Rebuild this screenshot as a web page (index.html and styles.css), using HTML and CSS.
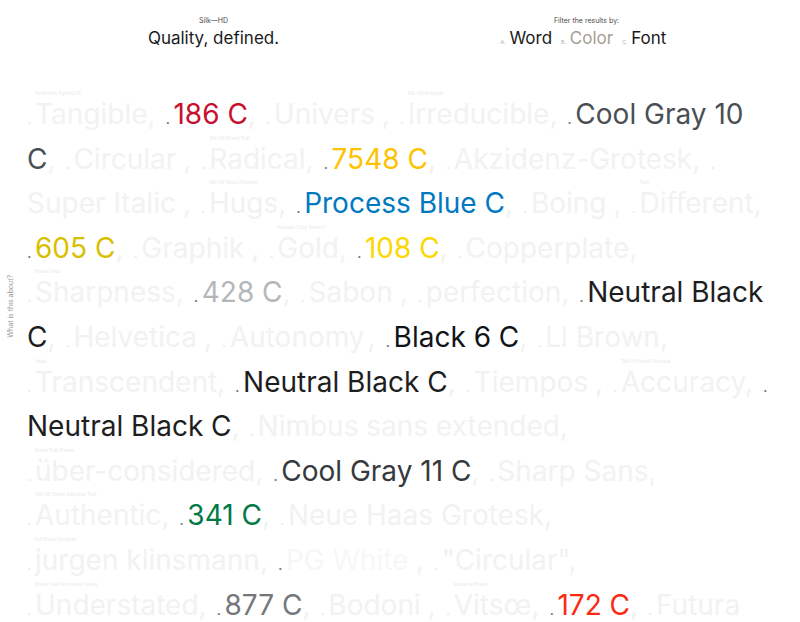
FILE: index.html
```html
<!DOCTYPE html>
<html lang="en">
<head>
<meta charset="utf-8">
<title>Silk—HD</title>
<link rel="stylesheet" href="styles.css">
</head>
<body>
<header class="top">
  <div class="brand">
    <div class="kicker">Silk—HD</div>
    <div class="title">Quality, defined.</div>
  </div>
  <div class="filter">
    <div class="kicker">Filter the results by:</div>
    <div class="title opts"><span class="opt"><span class="key">A.</span>Word</span><span class="opt muted"><span class="key">B.</span>Color</span><span class="opt"><span class="key">C.</span>Font</span></div>
  </div>
</header>
<aside class="about">What is this about?</aside>
<main class="cloud">
<p class="lines"><span class="it"><span class="lbl">Serial Font Symbol 01</span><span class="d">.</span>Tangible</span><span class="c">,</span> <span class="it k186"><span class="d">.</span>186 C</span><span class="c">,</span> <span class="it x"><span class="d">.</span>Univers</span><span class="c">,</span> <span class="it"><span class="lbl">Silk-HD Principle</span><span class="d">.</span>Irreducible</span><span class="c">,</span> <span class="it kcg10"><span class="d">.</span>Cool Gray 10<br>C</span><span class="c">,</span> <span class="it x"><span class="d">.</span>Circular</span><span class="c">,</span> <span class="it"><span class="lbl">Silk-HD Brand Trait</span><span class="d">.</span>Radical</span><span class="c">,</span> <span class="it k7548"><span class="d">.</span>7548 C</span><span class="c">,</span> <span class="it"><span class="d">.</span>Akzidenz-Grotesk</span><span class="c">,</span> <span class="it x"><span class="d">.</span><br>Super Italic</span><span class="c">,</span> <span class="it"><span class="lbl">Silk-HD Brand Emotion</span><span class="d">.</span>Hugs</span><span class="c">,</span> <span class="it kblue"><span class="d">.</span>Process Blue C</span><span class="c">,</span> <span class="it x"><span class="d">.</span>Boing</span><span class="c">,</span> <span class="it"><span class="lbl">Trait</span><span class="d">.</span>Different</span><span class="c">,</span><br><span class="it k605"><span class="d">.</span>605 C</span><span class="c">,</span> <span class="it x"><span class="d">.</span>Graphik</span><span class="c">,</span> <span class="it"><span class="lbl">Pantone Color Swatch</span><span class="d">.</span>Gold</span><span class="c">,</span> <span class="it k108"><span class="d">.</span>108 C</span><span class="c">,</span> <span class="it"><span class="d">.</span>Copperplate</span><span class="c">,</span><br><span class="it"><span class="lbl">Brand Value</span><span class="d">.</span>Sharpness</span><span class="c">,</span> <span class="it k428"><span class="d">.</span>428 C</span><span class="c">,</span> <span class="it x"><span class="d">.</span>Sabon</span><span class="c">,</span> <span class="it"><span class="d">.</span>perfection</span><span class="c">,</span> <span class="it knb"><span class="d">.</span>Neutral Black<br>C</span><span class="c">,</span> <span class="it x"><span class="d">.</span>Helvetica</span><span class="c">,</span> <span class="it y"><span class="d">.</span>Autonomy</span><span class="c">,</span> <span class="it kb6"><span class="d">.</span>Black 6 C</span><span class="c">,</span> <span class="it"><span class="d">.</span>Ll Brown</span><span class="c">,</span><br><span class="it"><span class="lbl">Value</span><span class="d">.</span>Transcendent</span><span class="c">,</span> <span class="it knb"><span class="d">.</span>Neutral Black C</span><span class="c">,</span> <span class="it x"><span class="d">.</span>Tiempos</span><span class="c">,</span> <span class="it"><span class="lbl">Silk-HD Brand Principle</span><span class="d">.</span>Accuracy</span><span class="c">,</span> <span class="it knb"><span class="d">.</span><br>Neutral Black C</span><span class="c">,</span> <span class="it"><span class="d">.</span>Nimbus sans extended</span><span class="c">,</span><br><span class="it"><span class="lbl">Brand Trait Phrase</span><span class="d">.</span>über-considered</span><span class="c">,</span> <span class="it kcg11"><span class="d">.</span>Cool Gray 11 C</span><span class="c">,</span> <span class="it"><span class="d">.</span>Sharp Sans</span><span class="c">,</span><br><span class="it"><span class="lbl">Silk-HD Brand Adjective Trait</span><span class="d">.</span>Authentic</span><span class="c">,</span> <span class="it k341"><span class="d">.</span>341 C</span><span class="c">,</span> <span class="it"><span class="d">.</span>Neue Haas Grotesk</span><span class="c">,</span><br><span class="it"><span class="lbl">Full Brand Designer</span><span class="d">.</span>jurgen klinsmann</span><span class="c">,</span> <span class="it kpg x"><span class="d">.</span>PG White</span><span class="c">,</span> <span class="it"><span class="d">.</span>"Circular"</span><span class="c">,</span><br><span class="it"><span class="lbl">Brand Trait Descriptive Quote</span><span class="d">.</span>Understated</span><span class="c">,</span> <span class="it k877"><span class="d">.</span>877 C</span><span class="c">,</span> <span class="it x"><span class="d">.</span>Bodoni</span><span class="c">,</span> <span class="it"><span class="lbl">Industrial Brand</span><span class="d">.</span>Vitsœ</span><span class="c">,</span> <span class="it k172"><span class="d">.</span>172 C</span><span class="c">,</span> <span class="it"><span class="d">.</span>Futura</span></p>
</main>
</body>
</html>
```
FILE: styles.css
```css
html, body {
  margin: 0;
  padding: 0;
  background: #ffffff;
}

body {
  font-family: Inter, "Liberation Sans", sans-serif;
  color: #1c1c1c;
  position: relative;
  min-height: 622px;
  overflow: hidden;
}

.top {
  display: grid;
  grid-template-columns: 1fr 1fr;
  padding: 16px 27px 0;
  text-align: center;
}

.kicker {
  font-size: 7px;
  line-height: 9px;
  color: #4a4a4a;
}

.title {
  font-size: 17px;
  line-height: 22px;
  margin-top: 2px;
  color: #1a1a1a;
}

.opts {
  display: flex;
  justify-content: center;
  gap: 9px;
  margin-left: -6px;
}

.opt {
  display: inline-flex;
  align-items: baseline;
}

.key {
  font-size: 5px;
  color: #b0b0b0;
  margin-right: 4px;
}

.muted {
  color: #a59e94;
}

.about {
  position: absolute;
  left: 6px;
  top: 275px;
  writing-mode: vertical-rl;
  transform: rotate(180deg);
  font-size: 7px;
  line-height: 9px;
  color: #9a9a9a;
}

.cloud {
  padding: 39px 27px 0;
}

.lines {
  margin: 0;
  font-size: 28px;
  line-height: 44.6px;
  white-space: nowrap;
  color: #f2f2f2;
  letter-spacing: 0;
}

.it {
  position: relative;
}

.it.x {
  margin-right: 7px;
}

.it.y {
  margin-right: 3px;
}

.c {
  margin-right: 2px;
}

.d {
  display: inline-block;
  width: 8px;
  font-size: 16px;
  line-height: 1;
  color: #ebebeb;
}

.lbl {
  position: absolute;
  left: 8px;
  top: -6px;
  font-size: 4.5px;
  line-height: 5px;
  color: #e8e8e8;
  white-space: nowrap;
}

.k186 .d, .kcg10 .d, .k7548 .d, .kblue .d, .k605 .d, .k108 .d, .k428 .d, .knb .d, .kb6 .d, .kcg11 .d, .k341 .d, .kpg .d, .k877 .d, .k172 .d {
  color: #7a7a7a;
}

.k186 { color: #c8102e; }
.kcg10 { color: #4b4f54; }
.k7548 { color: #ffc200; }
.kblue { color: #0079c1; }
.k605 { color: #d8bf00; }
.k108 { color: #fcd700; }
.k428 { color: #b4b7ba; }
.knb { color: #1e1e1f; }
.kb6 { color: #101418; }
.kcg11 { color: #36393d; }
.k341 { color: #007a45; }
.kpg { color: #f7f7f7; }
.k877 { color: #75787b; }
.k172 { color: #fa2a10; }
```
